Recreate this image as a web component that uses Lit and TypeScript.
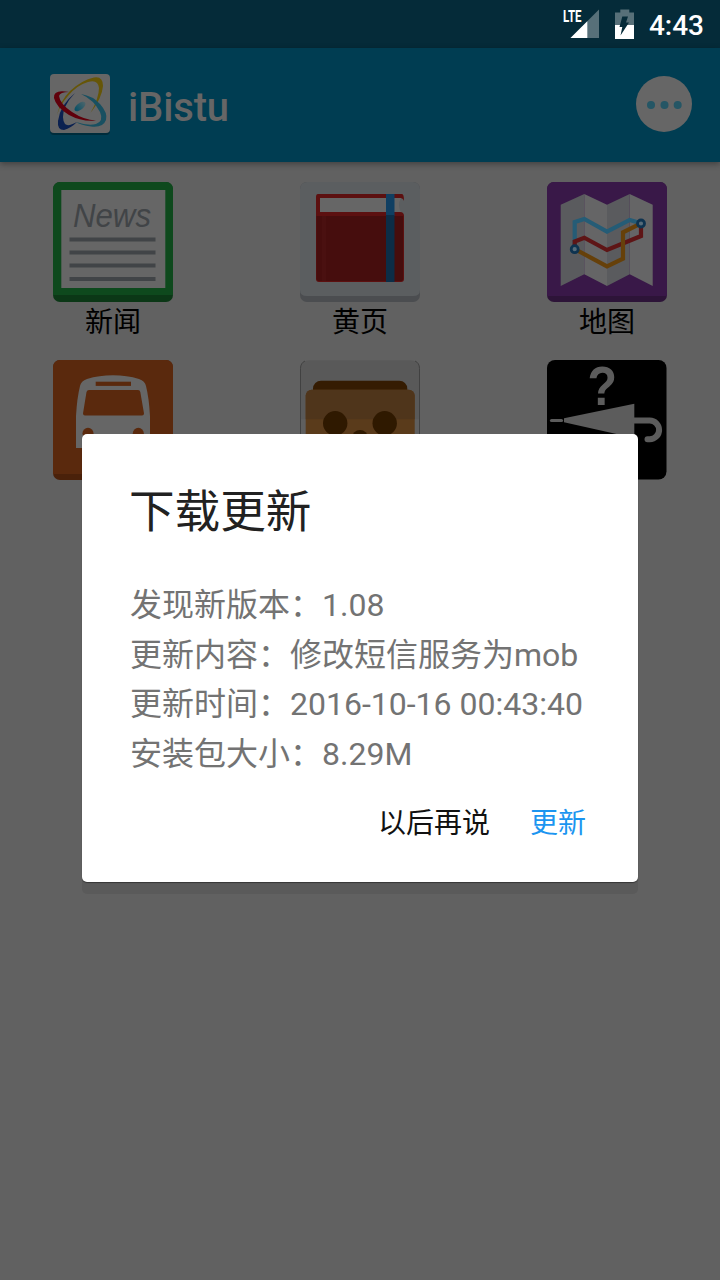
import { LitElement, html, svg, css } from "lit";
import { customElement } from "lit/decorators.js";

const news = svg`
  <rect width="120" height="120" rx="7" fill="#0b3716"/>
  <path d="M7 0H113a7 7 0 0 1 7 7V113H0V7a7 7 0 0 1 7-7Z" fill="#0e491d"/>
  <rect x="8.3" y="8" width="104" height="98" fill="#666"/>
  <text x="20" y="45" class="news" textLength="78" lengthAdjust="spacingAndGlyphs">News</text>
  <path d="M16.5 57.500H102.500M16.500 70.500H102.500M16.500 83.500H102.500M16.500 97H102.500" stroke="#414447" stroke-width="3.800"/>`;

const book = svg`
  <rect width="120" height="120" rx="7" fill="#4b4d50"/>
  <path d="M7 0H113a7 7 0 0 1 7 7V108q0 6-7 6H7q-7 0-7-6V7a7 7 0 0 1 7-7Z" fill="#5b5e60"/>
  <path d="M18 12H102q2 0 2 7q-1-3-4-3H20V30H100q4 0 4 4V97q0 3-3 3H19q-3 0-3-3V15q0-3 2-3Z" fill="#5c1010"/>
  <path d="M20 16H101Q97 23 101 30H20Z" fill="#666"/>
  <path d="M16.500 34H103V97q0 2-3 2H19q-2.500 0-2.500-3Z" fill="#460d0d"/>
  <path d="M22 34h4V99h-4Z" fill="#4a1010"/>
  <path d="M86 12h8.500V34H86Z" fill="#103f62"/><path d="M86 33h8.500V100H86Z" fill="#0c2d47"/>`;

const map = svg`
  <rect width="120" height="120" rx="7" fill="#2d1438"/>
  <path d="M7 0H113a7 7 0 0 1 7 7V114H0V7a7 7 0 0 1 7-7Z" fill="#391848"/>
  <path d="M13.700 22.700L37.300 12V92.300L13.700 104ZM60 22.700L82.700 12V92.300L60 104Z" fill="#5a5b5e"/>
  <path d="M37.300 12L60 22.700V104L37.300 92.300ZM82.700 12L105.700 22.700V104L82.700 92.300Z" fill="#656566"/>
  <g fill="none" stroke-width="4.200">
    <path d="M27.700 67V40L37.300 37L60 49.700L82.700 38L94 41.300" stroke="#255c76"/>
    <path d="M27.700 67V59.500L37.300 55.700L60 68L94 54V41.300" stroke="#5e1516"/>
    <path d="M27.700 67L60 84.300L76 76.700V50.300L94 41.300" stroke="#66400a"/>
    <circle cx="27.700" cy="67.200" r="3.500" stroke="#0e3350" stroke-width="2.800" fill="#566b79"/>
    <circle cx="94" cy="41.500" r="3.500" stroke="#0e3350" stroke-width="2.800" fill="#566b79"/>
  </g>`;

const bus = svg`
  <rect width="120" height="120" rx="7" fill="#4a210a"/>
  <path d="M7 0H113a7 7 0 0 1 7 7V114H0V7a7 7 0 0 1 7-7Z" fill="#5a290d"/>
  <path d="M23 88V56Q24 38 27 26Q28 21 34 19Q46 15.300 60 15.300T86 19Q92 21 93 26Q96 38 97 56V88Z" fill="#666"/>
  <rect x="42.700" y="21.700" width="35.300" height="4.200" fill="#5a290d"/>
  <path d="M36 30H85q2 0 2.300 2L91 53.500q0 2-2 2H32q-2 0-2-2L33.500 32q.5-2 2.500-2Z" fill="#5a290d"/>
  <circle cx="35" cy="73.300" r="5.500" fill="#5a290d"/><circle cx="85.300" cy="73.300" r="5.500" fill="#5a290d"/>`;

const cardboard = svg`
  <rect x=".5" y=".5" width="119" height="119" rx="8" fill="#5f5f5f"/>
  <path d="M.5 59.300V8.500a8 8 0 0 1 8-8H111.500a8 8 0 0 1 8 8V59.300Z" fill="#595959"/>
  <path d="M.5 112V8.500Q.5 3 5 1M119.500 112V8.500Q119.500 3 115 1" fill="none" stroke="#414141"/>
  <rect x="13" y="20.700" width="94.300" height="30" rx="8" fill="#351c02"/>
  <rect x="5.700" y="29.700" width="109" height="80" rx="6" fill="#5a3b1b"/>
  <path d="M5.700 59.300V35.700a6 6 0 0 1 6-6H108.700a6 6 0 0 1 6 6V59.300Z" fill="#4f351b"/>
  <g fill="#2f1900"><circle cx="35.200" cy="63.300" r="12.200"/><circle cx="84.700" cy="63.300" r="12.200"/><circle cx="60" cy="78" r="8"/></g>`;

const umbrella = svg`
  <rect width="119.500" height="119.500" rx="8" fill="#000"/>
  <text x="40.500" y="45" class="mark" textLength="29.500" lengthAdjust="spacingAndGlyphs">?</text>
  <path d="M17 58.300L87.300 43.700V78L17 62.300Z" fill="#5c5c5c"/>
  <path d="M4.500 60.500H14.500" stroke="#5c5c5c" stroke-width="3.200" stroke-linecap="round"/>
  <path d="M87 60.600H102.800a9.300 9.300 0 0 1 0 18.600H100.500" stroke="#5c5c5c" stroke-width="6" stroke-linecap="round" fill="none"/>`;

const apps = [
  { icon: news, label: "新闻" },
  { icon: book, label: "黄页" },
  { icon: map, label: "地图" },
  { icon: bus, label: "" },
  { icon: cardboard, label: "" },
  { icon: umbrella, label: "" },
];

const details = [
  "发现新版本：1.08",
  "更新内容：修改短信服务为mob",
  "更新时间：2016-10-16 00:43:40",
  "安装包大小：8.29M",
];

@customElement("app-root")
export class AppRoot extends LitElement {
  static styles = css`
    :host {
      display: block;
      position: relative;
      height: 1280px;
      overflow: hidden;
      background: #616161;
      font-family: Roboto, "Noto Sans CJK SC", sans-serif;
    }
    svg { display: block; flex: none; overflow: visible; }
    .status {
      display: flex;
      align-items: center;
      height: 48px;
      box-sizing: border-box;
      padding-right: 16px;
      justify-content: flex-end;
      background: #052b39;
      color: #fff;
    }
    .signal { margin-right: 15px; }
    .clock { font-size: 28px; font-weight: 500; line-height: 44px; padding-top: 4px; margin-left: 15px; }
    .lte { font: bold 16.500px Roboto, sans-serif; fill: #fff; }
    .bar {
      display: flex;
      align-items: center;
      height: 114px;
      box-sizing: border-box;
      padding: 0 28px 2px 50px;
      background: #003d52;
      box-shadow: 0 2px 6px rgba(0, 0, 0, 0.35);
    }
    .logo { margin-top: 2px; }
    .brand { flex: 1; margin-left: 18px; padding-top: 8px; font-size: 40px; font-weight: 500; line-height: 48px; letter-spacing: -0.15px; color: #666; }
    .grid {
      display: grid;
      grid-template-columns: repeat(3, 120px);
      grid-auto-rows: 178px;
      justify-content: space-between;
      padding: 20px 53px 0;
    }
    .label { margin-top: 1px; text-align: center; font-size: 28px; line-height: 40px; color: #000; }
    .news { font: italic 34px "Liberation Sans", sans-serif; fill: #414447; }
    .mark { font: bold 56px "Liberation Sans", sans-serif; fill: #5c5c5c; }
    .dialog {
      position: absolute;
      left: 82px;
      top: 434px;
      width: 556px;
      height: 448px;
      box-sizing: border-box;
      padding: 45px 48px 0;
      border-radius: 5px;
      background: #fff;
      box-shadow: 0 1px 1px rgba(0, 0, 0, 0.4), 0 12px 0 #5a5a5a;
    }
    .title { margin: 0 0 0 -1px; font-size: 45.600px; font-weight: 400; line-height: 68px; color: #212121; }
    .details { margin-top: 34px; font-size: 32px; line-height: 49.700px; color: #737373; white-space: nowrap; }
    .actions { display: flex; justify-content: flex-end; gap: 40px; margin-top: 24px; padding-right: 4px; }
    .action { border: 0; padding: 0; background: none; font: 28px/40px Roboto, "Noto Sans CJK SC", sans-serif; color: #111; }
    .primary { color: #1c95f0; }
  `;

  render() {
    return html`
      <div class="status">
        <svg class="signal" width="38" height="48" viewBox="562 0 38 48">
          <path d="M570.500 38L599 9.500V38Z" fill="#577079"/>
          <path d="M570.500 38L587.300 21.200V38Z" fill="#fff"/>
          <text class="lte" x="563" y="22" textLength="18.500" lengthAdjust="spacingAndGlyphs">LTE</text>
        </svg>
        <svg width="19" height="48" viewBox="615 0 19 48">
          <path d="M615 12.500H620.300V9.500H629.300V12.500H634V25H615Z" fill="#577079"/>
          <path d="M615 25H634V39H615Z" fill="#fff"/>
          <path d="M622.300 16.500H628L626 22.500H629L620.500 35.500L622.300 27H619.500Z" fill="#052b39"/>
        </svg>
        <span class="clock">4:43</span>
      </div>
      <div class="bar">
        <svg class="logo" width="60" height="62" viewBox="0 0 60 62">
          <defs><linearGradient id="core" x1="0" x2="1"><stop stop-color="#034f66"/><stop offset="1" stop-color="#4d656b"/></linearGradient></defs>
          <rect y="2" width="60" height="59" rx="4" fill="#002c3b"/>
          <rect width="60" height="59" rx="4" fill="#666"/>
          <path d="M7 41Q10 27 20 17Q32 6 44 3.500Q53 2 53 12Q52 24 40.500 39Q49 24 49 14Q48 5 38 8Q27 11 18 22Q10 31 7 41Z" fill="#665608"/>
          <path d="M25 19Q10 31 8 47Q7 56 14 56Q21 54 27 48Q18 53 15 50Q11 44 15 33Q19 25 25 19Z" fill="#0b2150"/>
          <path d="M31 20Q43 22 50 30Q58 39 56 46Q53 54 41 52.500Q31 51 26 48Q38 52 46 50Q54 47 50 38Q44 26 31 20Z" fill="#185061"/>
          <path d="M19 18Q3 15 4 24Q6 33 19 41Q32 48 46 46.500Q34 46 22 38Q10 30 9 22Q10 18 19 18Z" fill="#60000b"/>
          <ellipse cx="30" cy="32.500" rx="6.500" ry="3.300" transform="rotate(-38 30 32.500)" fill="url(#core)"/>
        </svg>
        <div class="brand">iBistu</div>
        <svg width="56" height="56" viewBox="0 0 56 56">
          <circle cx="28" cy="28" r="28" fill="#666"/>
          <g fill="#255665"><circle cx="15" cy="29" r="4"/><circle cx="28.500" cy="29" r="4"/><circle cx="41.700" cy="29" r="4"/></g>
        </svg>
      </div>
      <div class="grid">
        ${apps.map((a) => html`<div>
          <svg width="120" height="120" viewBox="0 0 120 120">${a.icon}</svg>
          ${a.label ? html`<div class="label">${a.label}</div>` : ""}
        </div>`)}
      </div>
      <div class="dialog" role="dialog">
        <h1 class="title">下载更新</h1>
        <div class="details">${details.map((d) => html`<div>${d}</div>`)}</div>
        <div class="actions">
          <button class="action">以后再说</button>
          <button class="action primary">更新</button>
        </div>
      </div>`;
  }
}
